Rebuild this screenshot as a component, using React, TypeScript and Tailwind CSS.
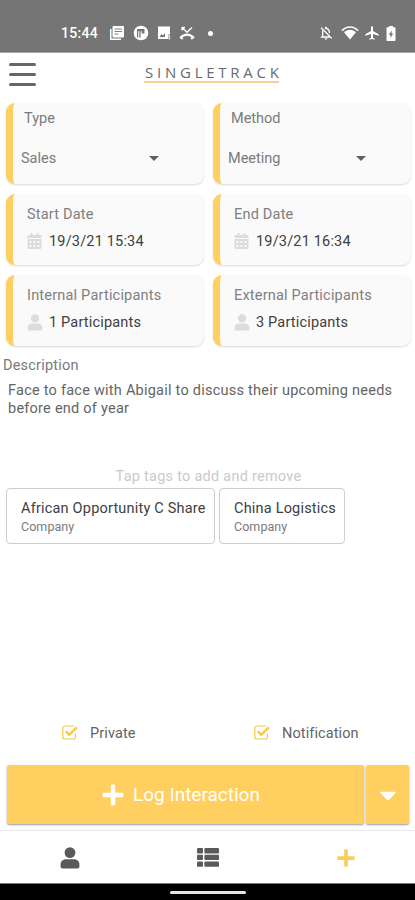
import React from 'react';
import { FaCalendarAlt, FaCaretDown, FaPlus } from 'react-icons/fa';
import { MdAirplanemodeActive, MdOutlineNotificationsOff } from 'react-icons/md';

const UserIcon: React.FC<{ className?: string }> = ({ className }) => (
  <svg viewBox="0 0 20 22" fill="currentColor" className={className}>
    <circle cx="10" cy="5.6" r="5.4" />
    <path d="M6 12.3h8c3.3 0 5.4 2.3 5.4 5.3v2.2c0 1-.8 1.7-1.8 1.7H2.4c-1 0-1.8-.7-1.8-1.7v-2.2c0-3 2.1-5.3 5.4-5.3z" />
  </svg>
);

const ListIcon: React.FC = () => (
  <svg viewBox="0 0 22 19" fill="currentColor" className="h-[19px] w-[22px]">
    {[0, 6.7, 13.4].map((y) => (
      <React.Fragment key={y}>
        <rect x="0" y={y} width="6" height="5.4" rx="1" />
        <rect x="7.4" y={y} width="14.6" height="5.4" rx="1" />
      </React.Fragment>
    ))}
  </svg>
);

const CheckIcon: React.FC = () => (
  <svg viewBox="0 0 17 15" fill="none" stroke="currentColor" className="mb-[3px] h-[15px] w-[17px] text-[#fcc44f]">
    <path d="M13.5 8.5v3.2c0 1.3-1 2.3-2.3 2.3H3.1C1.8 14 .8 13 .8 11.7V3.3C.8 2 1.8 1 3.1 1h8.1c.5 0 .9.1 1.3.3" strokeWidth="1.2" />
    <path d="M3.8 6.2l3.4 3.6 7.6-7.5" strokeWidth="2.4" />
  </svg>
);

const StatusBar: React.FC = () => (
  <div className="flex h-[53px] items-start border-b border-[#a5a5a5] bg-[#757575] pt-[25px] text-white">
    <div className="flex h-4 w-full items-center pl-[61px]">
      <span className="w-[49px] text-[14px] font-medium tracking-[0.3px]">15:44</span>
      <svg viewBox="0 0 14 14" className="h-[14px] w-[14px]">
        <path d="M0 3h1.5v9.5H11V14H0z" fill="white" />
        <rect x="2.5" width="11.5" height="11.5" rx="1" fill="white" />
        <path d="M4.5 3H12M4.5 5.5H12M4.5 8h4" stroke="#757575" strokeWidth=".9" />
      </svg>
      <svg viewBox="0 0 16 16" className="ml-[9px] h-4 w-4">
        <circle cx="8" cy="8" r="7.3" fill="white" />
        <path d="M4 4h7.5v4.5H8.8V6.2H7.6v6.3H6.3V6.2H5.2v6.3H4z" fill="#757575" />
      </svg>
      <svg viewBox="0 0 14 14" className="ml-[8px] h-[14px] w-[14px]">
        <path d="M1 .5h12v8h-1.5V13H1z" fill="white" />
        <path d="M2.500 11l2-3L6 9.500 8 7v4z" fill="#757575" />
        <path d="M12.500 9.500v2M12.500 12.300v1.200" stroke="white" strokeWidth="1.200" />
      </svg>
      <svg viewBox="0 0 16 14" fill="none" stroke="white" className="ml-[8px] h-[14px] w-4">
        <path d="M3 1.500l5 4.800 5-4.800M3 1v3.500M3 1.500h3" strokeWidth="1.300" />
        <path d="M1.500 11.800C5 7.500 11 7.500 14.500 11.800" strokeWidth="2.200" />
        <path d="M1 11l2.800 2M15 11l-2.800 2" strokeWidth="2" />
      </svg>
      <span className="ml-[13px] h-[5px] w-[5px] rounded-full bg-white" />
      <MdOutlineNotificationsOff className="ml-[105px] h-4 w-4" />
      <svg viewBox="0 0 18 14" className="ml-[7px] h-[14px] w-[18px]">
        <path d="M1 4.600C5.500-.200 12.500-.200 17 4.600" fill="none" stroke="white" strokeWidth="1.600" />
        <path d="M3 6.300c3.500-3.400 8.500-3.400 12 0L9 13.500z" fill="white" />
      </svg>
      <MdAirplanemodeActive className="ml-[5px] h-4 w-4" />
      <svg viewBox="0 0 10 15" className="ml-[6px] h-[15px] w-[10px]">
        <path d="M3 0h4v1.300h1.500c.6 0 1 .4 1 1V14c0 .6-.4 1-1 1h-7c-.6 0-1-.4-1-1V2.300c0-.6.400-1 1-1H3z" fill="white" />
        <path d="M5.600 4.500v3h1.600L4.400 12V8.800H2.800z" fill="#757575" />
      </svg>
    </div>
  </div>
);

const Header: React.FC = () => (
  <header className="flex h-[50px] items-start">
    <div className="mt-[10px] ml-[9px] flex w-[27px] flex-col gap-[7px]">
      <span className="h-[3px] rounded-sm bg-[#666]" />
      <span className="h-[3px] rounded-sm bg-[#666]" />
      <span className="h-[3px] rounded-sm bg-[#666]" />
    </div>
    <div className="mt-[11px] ml-[108px] flex h-[19px] w-[135px] justify-between border-b-2 border-[#f7cf97] pl-px font-['Open_Sans',sans-serif] text-[15px] leading-[17px] font-medium text-[#666b6e]">
      {'SINGLETRACK'.split('').map((letter, i) => (
        <span key={i}>{letter}</span>
      ))}
    </div>
  </header>
);

const card = 'rounded-[9px] border-l-[7px] border-[#ffd060] bg-[#fafafa] shadow-[0_1px_2px_rgba(0,0,0,0.15)]';

const SelectCard: React.FC<{ label: string; value: string }> = ({ label, value }) => (
  <div className={`${card} h-[81px] pt-[6px]`}>
    <div className="pl-[11px] text-[14.5px] leading-5 text-[#7a7a7a]">{label}</div>
    <div className="mt-5 flex items-center pl-[8px] text-[#7a7a7a]">
      <span className="w-[128px] text-[14.5px] leading-5">{value}</span>
      <span className="mb-[2px] h-0 w-0 border-x-[5px] border-t-[5px] border-x-transparent border-t-[#606060]" />
    </div>
  </div>
);

const InfoCard: React.FC<{ label: string; value: string; icon: React.ReactNode }> = ({ label, value, icon }) => (
  <div className={`${card} h-[71px] pt-[11px] pl-[14px]`}>
    <div className="text-[14.5px] leading-5 tracking-[0.2px] text-[#808080]">{label}</div>
    <div className="mt-[7px] flex items-center text-[14.5px] leading-5 tracking-[0.18px] text-[#404040]">
      <span className="mb-[2px] w-[22px] text-[#dcdcdc]">{icon}</span>
      {value}
    </div>
  </div>
);

const tags = [
  { name: 'African Opportunity C Share', kind: 'Company', width: 'w-[209px]' },
  { name: 'China Logistics', kind: 'Company', width: 'w-[126px]' },
];

export default function App() {
  return (
    <div className="flex h-[900px] w-[415px] flex-col overflow-hidden bg-white font-[Roboto,sans-serif]">
      <StatusBar />
      <Header />
      <main className="flex flex-1 flex-col">
        <div className="grid grid-cols-[198px_198px] gap-x-[9px] gap-y-[10px] pl-[6px]">
          <SelectCard label="Type" value="Sales" />
          <SelectCard label="Method" value="Meeting" />
          <InfoCard label="Start Date" value="19/3/21 15:34" icon={<FaCalendarAlt className="h-4 w-[15px]" />} />
          <InfoCard label="End Date" value="19/3/21 16:34" icon={<FaCalendarAlt className="h-4 w-[15px]" />} />
          <InfoCard label="Internal Participants" value="1 Participants" icon={<UserIcon className="h-[17px] w-4" />} />
          <InfoCard label="External Participants" value="3 Participants" icon={<UserIcon className="h-[17px] w-4" />} />
        </div>

        <div className="mt-[10px] pl-[3px] text-[14.5px] leading-5 tracking-[0.2px] text-[#7a7a7a]">Description</div>
        <p className="mt-[6px] h-[85px] w-[405px] pl-[8px] text-[14.5px] leading-[18px] tracking-[0.24px] text-[#646464]">
          Face to face with Abigail to discuss their upcoming needs before end of year
        </p>
        <div className="pl-[2px] text-center text-[14.5px] leading-5 tracking-[0.25px] text-[#cacaca]">Tap tags to add and remove</div>
        <div className="mt-px flex gap-1 pl-[6px]">
          {tags.map((tag) => (
            <div key={tag.name} className={`${tag.width} h-[56px] rounded-[4px] border border-[#cecece] pt-[10px] pl-[14px] whitespace-nowrap`}>
              <div className="text-[14.5px] leading-5 tracking-[0.2px] text-[#404040]">{tag.name}</div>
              <div className="text-[12.5px] leading-4 tracking-[0.05px] text-[#7a7a7a]">{tag.kind}</div>
            </div>
          ))}
        </div>

        <div className="mt-auto flex h-5 items-center text-[14.5px] tracking-[0.1px] text-[#646464]">
          <div className="flex w-[192px] items-center gap-[11px] pl-[62px]">
            <CheckIcon /> Private
          </div>
          <div className="flex items-center gap-[11px] pl-[62px]">
            <CheckIcon /> Notification
          </div>
        </div>

        <div className="mt-[21px] mb-[6px] flex gap-[2px] pl-[7px] text-white">
          <button className="flex h-[59px] w-[357px] items-center justify-center gap-[9px] rounded-[2px] bg-[#ffd060] pt-[2px] pr-[9px] text-[19px] shadow-[0_1px_2px_rgba(0,0,0,0.4)]">
            <FaPlus className="mb-[2px] h-6 w-[22px]" /> Log Interaction
          </button>
          <button className="flex h-[59px] w-[43px] items-center justify-center rounded-[2px] bg-[#ffd060] shadow-[0_1px_2px_rgba(0,0,0,0.4)]">
            <FaCaretDown className="h-[26px] w-[26px]" />
          </button>
        </div>
      </main>

      <nav className="flex h-[53px] items-center border-t border-[#e8eaea] pt-px pl-px text-[#5a5a5a]">
        <div className="flex flex-1 justify-center">
          <UserIcon className="h-[22px] w-5" />
        </div>
        <div className="flex flex-1 justify-center">
          <ListIcon />
        </div>
        <div className="flex flex-1 justify-center">
          <FaPlus className="h-5 w-5 text-[#fbcd5d]" />
        </div>
      </nav>
      <div className="flex h-[17px] justify-center border-t border-[#777] bg-black pt-[7px]">
        <span className="h-[3px] w-[76px] rounded-full bg-[#e5e5e5]" />
      </div>
    </div>
  );
}
